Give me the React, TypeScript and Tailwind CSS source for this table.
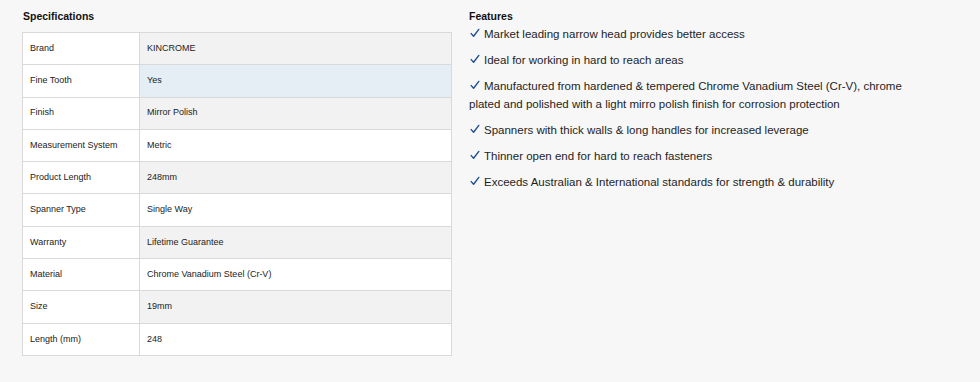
import React from "react";

const specs: [string, string][] = [
  ["Brand", "KINCROME"],
  ["Fine Tooth", "Yes"],
  ["Finish", "Mirror Polish"],
  ["Measurement System", "Metric"],
  ["Product Length", "248mm"],
  ["Spanner Type", "Single Way"],
  ["Warranty", "Lifetime Guarantee"],
  ["Material", "Chrome Vanadium Steel (Cr-V)"],
  ["Size", "19mm"],
  ["Length (mm)", "248"],
];

const features = [
  "Market leading narrow head provides better access",
  "Ideal for working in hard to reach areas",
  "Manufactured from hardened & tempered Chrome Vanadium Steel (Cr-V), chrome plated and polished with a light mirro polish finish for corrosion protection",
  "Spanners with thick walls & long handles for increased leverage",
  "Thinner open end for hard to reach fasteners",
  "Exceeds Australian & International standards for strength & durability",
];

function Check() {
  return (
    <svg
      width="10"
      height="10"
      viewBox="0 0 10 10"
      className="inline-block align-baseline mr-[4px] ml-[1px]"
      aria-hidden="true"
    >
      <path d="M1.2 5.6 L3.6 8.2 L8.8 1.4" fill="none" stroke="#1f4f8f" strokeWidth="1.4" strokeLinecap="round" strokeLinejoin="round" />
    </svg>
  );
}

export default function App() {
  return (
    <div
      className="w-[980px] h-[382px] bg-[#f7f7f7] text-[#222] flex gap-[17px] pl-[22px] pt-[8px]"
      style={{ fontFamily: '"Liberation Sans", Arial, sans-serif' }}
    >
      <div className="w-[430px]">
        <h2 className="text-[10.5px] font-bold leading-[16px] pl-[1px] mb-[8px] text-[#111]">Specifications</h2>
        <table className="w-[430px] border-collapse border border-[#d9d9d9] text-[9px] text-[#222]">
          <tbody>
            {specs.map(([k, v], i) => {
              const valBg = i === 1 ? "bg-[#e4eef4]" : i % 2 === 0 ? "bg-[#f2f2f2]" : "bg-white";
              return (
                <tr key={k} className="h-[32.3px]">
                  <td className="w-[117px] bg-white border border-[#d9d9d9] pl-[7px] align-middle">{k}</td>
                  <td className={`${valBg} border border-[#d9d9d9] pl-[7px] align-middle`}>{v}</td>
                </tr>
              );
            })}
          </tbody>
        </table>
      </div>
      <div className="w-[440px]">
        <h2 className="text-[10.5px] font-bold leading-[16px] text-[#111]">Features</h2>
        <ul className="mt-[1px] flex flex-col gap-[8px]">
          {features.map((f) => (
            <li key={f} className="text-[11.5px] leading-[18px] text-[#1e1e1e]">
              <Check />
              {f}
            </li>
          ))}
        </ul>
      </div>
    </div>
  );
}
